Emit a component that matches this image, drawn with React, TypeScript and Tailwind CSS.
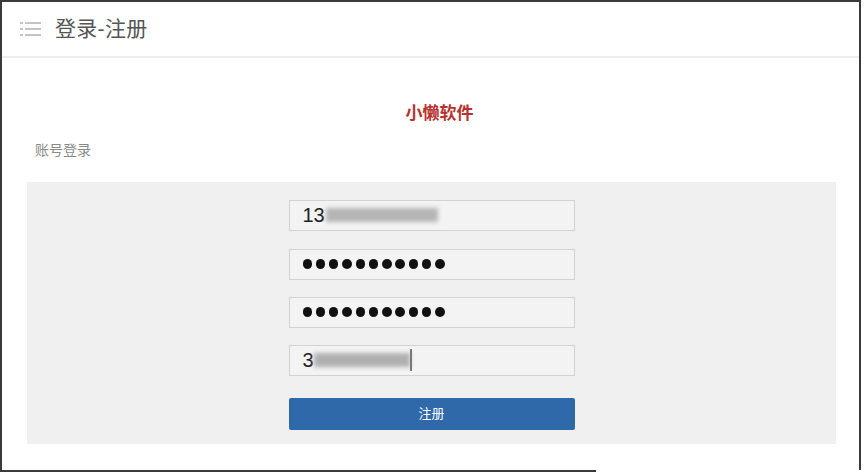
import React from "react";

const font = { fontFamily: '"Liberation Sans", "Noto Sans CJK SC", sans-serif' };

const inputClass =
  "flex items-center h-[31px] w-[286px] border border-[#d2d2d2] bg-[#f3f3f3] pl-[13px]";

function ListIcon() {
  return (
    <svg width="22" height="16" viewBox="0 0 22 16" aria-hidden>
      <g fill="#c4c4c4">
        <rect x="0" y="1" width="3" height="2" />
        <rect x="5" y="1" width="16" height="2" />
        <rect x="0" y="7" width="3" height="2" />
        <rect x="5" y="7" width="16" height="2" />
        <rect x="0" y="13" width="3" height="2" />
        <rect x="5" y="13" width="16" height="2" />
      </g>
    </svg>
  );
}

function Dots() {
  return (
    <div className="flex gap-[3.9px]">
      {Array.from({ length: 11 }).map((_, i) => (
        <span key={i} className="block w-[9.4px] h-[9.4px] rounded-full bg-[#111]" />
      ))}
    </div>
  );
}

export default function App() {
  return (
    <div className="w-[865px] h-[472px] bg-white overflow-hidden" style={font}>
      <div className="w-[861px] h-[470px] border-t-2 border-l-2 border-r-2 border-[#3a3a3a] flex flex-col">
        {/* Header */}
        <header className="h-[56px] flex items-center gap-[13px] pl-[18px] border-b-2 border-[#ececec]">
          <ListIcon />
          <h1 className="text-[21px] text-[#555] tracking-[0.3px]">登录-注册</h1>
        </header>

        <div className="flex flex-col flex-1 px-[25px]">
          <div className="pt-[43px] pl-[18px] text-center">
            <span className="text-[17px] font-bold text-[#b8322e]">小懒软件</span>
          </div>
          <p className="mt-[13px] pl-[8px] text-[14px] text-[#8a8a8a]">账号登录</p>

          {/* Form panel */}
          <div className="mt-[21px] w-[809px] h-[262px] bg-[#f0f0f0] flex flex-col items-center pt-[18px]">
            <div className={inputClass}>
              <span className="text-[20px] text-[#222] leading-none">13</span>
              <span className="block ml-[1px] w-[112px] h-[14px] bg-[#b5b5b5] blur-[2px]" />
            </div>
            <div className={`${inputClass} mt-[18px]`}>
              <Dots />
            </div>
            <div className={`${inputClass} mt-[17px]`}>
              <Dots />
            </div>
            <div className={`${inputClass} mt-[17px]`}>
              <span className="text-[20px] text-[#222] leading-none">3</span>
              <span className="block w-[96px] h-[14px] bg-[#b0b0b0] blur-[2px]" />
              <span className="block w-[2px] h-[22px] bg-[#777] blur-[0.5px]" />
            </div>
            <button
              type="button"
              className="mt-[22px] w-[286px] h-[32px] rounded-[2px] bg-[#2f69aa] text-white text-[13px]"
            >
              注册
            </button>
          </div>
        </div>
      </div>
      <div className="w-[596px] h-[2px] bg-[#3a3a3a]" />
    </div>
  );
}
